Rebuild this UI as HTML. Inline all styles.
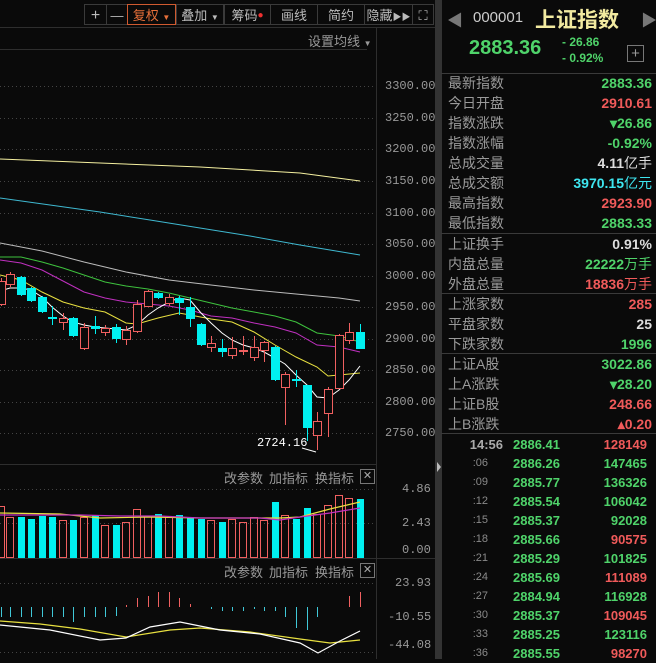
<!DOCTYPE html>
<html><head><meta charset="utf-8"><style>
body{margin:0;width:656px;height:659px;background:#0a0a0a;overflow:hidden;font-family:"Liberation Sans","Noto Sans CJK SC",sans-serif;position:relative}
.t{position:absolute;white-space:nowrap}
.btn{position:absolute;top:4px;height:21px;border:1px solid #3a3a3a;color:#bbb;font-size:13px;line-height:21px;text-align:center;box-sizing:border-box}
.row{position:absolute;left:448px;width:204px;height:20px;font-size:14px;line-height:20px}
.row .l{color:#9a9a9a;position:absolute;left:0}
.row .v{position:absolute;right:0;font-weight:bold}
.g{color:#4fd36a}.r{color:#f05a5a}.w{color:#ddd}.c{color:#3ee6f0}
.tk{position:absolute;left:441px;width:215px;height:19px;font-size:13px;line-height:19px;font-weight:bold}
.tk .a{position:absolute;right:168px;color:#8a8a8a;font-weight:normal;font-size:11px}
.tk .b{position:absolute;left:72px;color:#4fd36a}
.tk .d{position:absolute;right:9px}
.sep{position:absolute;left:441px;width:215px;height:1px;background:#3a3a3a}
.lab{position:absolute;font-size:13px;color:#999}
</style></head><body>
<svg width="656" height="659" style="position:absolute;left:0;top:0">
<g stroke="#2e2e2e"><line x1="376.5" y1="27" x2="376.5" y2="659"/><line x1="0" y1="464.5" x2="376" y2="464.5"/><line x1="0" y1="558.5" x2="436" y2="558.5"/><line x1="0" y1="49.5" x2="367" y2="49.5"/><line x1="0" y1="27.5" x2="435" y2="27.5"/></g>
<rect x="435" y="0" width="7" height="659" fill="#333"/>
<path d="M437 462 L441 467 L437 472Z" fill="#bbb"/>
<g stroke="#444" stroke-dasharray="1,3">
<line x1="0" y1="86.5" x2="376" y2="86.5"/><line x1="0" y1="118.5" x2="376" y2="118.5"/><line x1="0" y1="149.5" x2="376" y2="149.5"/><line x1="0" y1="181.5" x2="376" y2="181.5"/><line x1="0" y1="213.5" x2="376" y2="213.5"/><line x1="0" y1="244.5" x2="376" y2="244.5"/><line x1="0" y1="276.5" x2="376" y2="276.5"/><line x1="0" y1="307.5" x2="376" y2="307.5"/><line x1="0" y1="339.5" x2="376" y2="339.5"/><line x1="0" y1="370.5" x2="376" y2="370.5"/><line x1="0" y1="402.5" x2="376" y2="402.5"/><line x1="0" y1="433.5" x2="376" y2="433.5"/>
<line x1="0" y1="489.5" x2="376" y2="489.5"/><line x1="0" y1="523.5" x2="376" y2="523.5"/>
<line x1="0" y1="583.5" x2="376" y2="583.5"/><line x1="0" y1="652.5" x2="376" y2="652.5"/>
</g>
<g fill="none" stroke-width="1">
<polyline stroke="#f5f0a0" points="0,159 100,163 200,167 300,173 360,181"/>
<polyline stroke="#3fb8d0" points="0,198 50,205 100,212 150,220 200,228 250,236 300,245 360,255"/>
<polyline stroke="#bbb" points="0,243 42,251 84,262 126,272 169,280 211,285 254,290 296,294 339,298 360,301"/>
<polyline stroke="#3ec23e" points="0,257 21,257 42,262 63,268 84,275 105,282 126,286 148,289 169,293 190,298 211,303 232,308 254,312 275,316 296,322 317,333 339,336 360,342"/>
<polyline stroke="#c030c0" points="0,260 21,263 42,270 63,281 84,292 105,298 126,302 148,304 169,306 190,310 211,316 232,318 254,323 275,327 296,333 317,345 339,347 360,352"/>
<polyline stroke="#e8e040" points="0,275 21,280 42,292 63,302 84,308 105,312 126,323 137,324 158,318 179,313 190,315 211,319 232,322 254,332 275,345 296,357 317,367 328,376 339,375 360,373"/>
<polyline stroke="#fff" points="0,291 10,288 21,288 31,290 42,297 52,307 63,316 73,322 84,325 95,327 105,328 116,329 126,330 137,325 148,315 158,308 169,302 179,298 190,300 201,313 211,323 222,333 232,340 243,345 254,348 264,352 275,358 285,364 296,375 307,385 317,397 328,398 339,390 349,380 360,366"/>
</g>
<g id="c"></g>
<text x="257" y="446" fill="#fff" font-size="12" font-family="Liberation Mono">2724.16</text>
<path d="M302 448 L316 452" stroke="#fff" fill="none"/>
<g fill="none" stroke-width="1.2">
<polyline stroke="#e8e040" points="0,621 40,624 80,629 126,637 170,630 200,628 250,632 300,639 330,643 360,640"/>
<polyline stroke="#fff" points="0,625 50,630 100,640 126,638 150,627 180,622 220,630 260,634 300,643 318,653 340,641 360,631"/>
<polyline stroke="#e8e040" points="0,513 60,514 100,518 150,517 200,518 260,518 280,518 300,517 330,509 360,502"/>
<polyline stroke="#c030c0" points="0,515 80,515 120,516 160,516 200,518 260,518 280,520 300,517 330,513 360,508"/>
</g>
</svg>
<script>
var C=[[1,'r',281,304,278,306],[10,'r',274,284,272,287],[21,'c',277,295,276,296],[31,'c',288,301,287,302],[42,'c',297,312,296,313],[52,'c',317,319,306,325],[63,'r',318,322,313,330],[73,'c',318,336,317,337],[84,'r',327,348,323,350],[95,'c',326,329,316,334],[105,'r',328,332,325,336],[116,'c',327,339,324,343],[126,'r',330,339,326,345],[137,'r',304,331,300,333],[148,'r',291,306,290,307],[158,'c',293,298,292,299],[169,'r',297,303,294,306],[179,'c',298,303,296,315],[190,'c',307,319,297,327],[201,'c',324,345,323,346],[211,'r',343,347,336,352],[222,'c',348,352,339,357],[232,'r',348,355,337,359],[243,'r',350,351,336,355],[254,'r',347,357,336,361],[264,'r',342,350,341,362],[275,'c',347,380,346,381],[285,'r',374,387,372,425],[296,'c',379,381,370,387],[307,'c',385,428,385,441],[317,'r',421,435,412,450],[328,'r',389,413,387,437],[339,'r',335,388,334,388],[349,'r',332,340,323,344],[360,'c',332,349,324,349]];
var V=[506,517,517,519,516,517,520,520,517,515,525,525,522,509,516,514,517,515,517,519,520,522,519,522,517,520,502,515,519,508,514,505,495,498,499];
var M=[617,617,617,617,617,617,617,622,617,617,617,616,605,598,596,592,592,598,604,607,609,611,611,611,609,611,611,617,628,630,617,0,0,596,592];
var s='',R='#f06060',B='#00f0f0';
C.forEach(function(k,i){var x=k[0],col=k[1]=='r'?R:B;
s+='<line x1="'+(x+.5)+'" y1="'+k[4]+'" x2="'+(x+.5)+'" y2="'+k[5]+'" stroke="'+col+'"/>';
var h=Math.max(1,k[3]-k[2]);
if(k[1]=='r')s+='<rect x="'+(x-3.5)+'" y="'+(k[2]+.5)+'" width="8" height="'+h+'" fill="#0a0a0a" stroke="'+col+'"/>';
else s+='<rect x="'+(x-4)+'" y="'+k[2]+'" width="9" height="'+h+'" fill="'+col+'"/>';
var v=V[i];
if(k[1]=='r')s+='<rect x="'+(x-3.5)+'" y="'+(v+.5)+'" width="7" height="'+(557-v)+'" fill="none" stroke="'+col+'"/>';
else s+='<rect x="'+(x-3)+'" y="'+v+'" width="7" height="'+(558-v)+'" fill="'+col+'"/>';
var m=M[i];if(m){var c2=m<607?R:'#40c8d8';s+='<line x1="'+(x+.5)+'" y1="607" x2="'+(x+.5)+'" y2="'+m+'" stroke="'+c2+'"/>';}
});
document.getElementById('c').outerHTML='<g>'+s+'</g>';
</script>
<div class="btn" style="left:84px;width:23px;font-size:16px">+</div>
<div class="btn" style="left:106px;width:22px">—</div>
<div class="btn" style="left:127px;width:49px;border-color:#d05a30;color:#e8703a">复权 <span style="font-size:8px">▼</span></div>
<div class="btn" style="left:176px;width:48px">叠加 <span style="font-size:8px">▼</span></div>
<div class="btn" style="left:224px;width:47px">筹码<span style="color:#f03030;font-size:10px;vertical-align:top">●</span></div>
<div class="btn" style="left:270px;width:48px">画线</div>
<div class="btn" style="left:317px;width:48px">简约</div>
<div class="btn" style="left:364px;width:49px">隐藏<span style="font-size:9px">▶▶</span></div>
<div class="btn" style="left:412px;width:22px">⛶</div>
<div class="t" style="left:308px;top:31px;font-size:13px;color:#999">设置均线 <span style="font-size:8px">▼</span></div>
<div style="position:absolute;left:385px;top:0;font-size:12px;color:#999;font-family:'Liberation Mono'">
<div class="t" style="top:79px">3300.00</div><div class="t" style="top:111px">3250.00</div><div class="t" style="top:142px">3200.00</div><div class="t" style="top:174px">3150.00</div><div class="t" style="top:206px">3100.00</div><div class="t" style="top:237px">3050.00</div><div class="t" style="top:269px">3000.00</div><div class="t" style="top:300px">2950.00</div><div class="t" style="top:332px">2900.00</div><div class="t" style="top:363px">2850.00</div><div class="t" style="top:395px">2800.00</div><div class="t" style="top:426px">2750.00</div>
<div class="t" style="top:482px;left:17px">4.86</div><div class="t" style="top:516px;left:17px">2.43</div><div class="t" style="top:543px;left:17px">0.00</div>
<div class="t" style="top:576px;left:10px">23.93</div><div class="t" style="top:610px;left:3px">-10.55</div><div class="t" style="top:638px;left:3px">-44.08</div>
</div>
<div class="lab" style="left:224px;top:468px">改参数</div><div class="lab" style="left:269px;top:468px">加指标</div><div class="lab" style="left:315px;top:468px">换指标</div>
<div class="t" style="left:360px;top:469px;width:13px;height:13px;border:1px solid #777;color:#aaa;font-size:11px;line-height:13px;text-align:center">✕</div>
<div class="lab" style="left:224px;top:562px">改参数</div><div class="lab" style="left:269px;top:562px">加指标</div><div class="lab" style="left:315px;top:562px">换指标</div>
<div class="t" style="left:360px;top:563px;width:13px;height:13px;border:1px solid #777;color:#aaa;font-size:11px;line-height:13px;text-align:center">✕</div>

<div class="t" style="left:447px;top:7px;color:#777;font-size:16px">◀</div>
<div class="t" style="left:641px;top:7px;color:#777;font-size:16px">▶</div>
<div class="t" style="left:473px;top:9px;color:#ccc;font-size:15px">000001</div>
<div class="t" style="left:535px;top:4px;color:#f2eaa0;font-size:21px;font-weight:bold">上证指数</div>
<div class="t" style="left:469px;top:37px;color:#4fd36a;font-size:20px;font-weight:bold">2883.36</div>
<div class="t" style="left:562px;top:34px;color:#4fd36a;font-size:12px;font-weight:bold;line-height:16px">- 26.86<br>- 0.92%</div>
<div class="t" style="left:627px;top:45px;width:15px;height:15px;border:1px solid #777;color:#999;font-size:15px;line-height:15px;text-align:center">+</div>
<div class="sep" style="top:73px"></div><div class="sep" style="top:233px"></div><div class="sep" style="top:293px"></div><div class="sep" style="top:353px"></div><div class="sep" style="top:433px"></div>
<div class="row" style="top:73px"><span class="l">最新指数</span><span class="v g">2883.36</span></div>
<div class="row" style="top:93px"><span class="l">今日开盘</span><span class="v r">2910.61</span></div>
<div class="row" style="top:113px"><span class="l">指数涨跌</span><span class="v g">▾26.86</span></div>
<div class="row" style="top:133px"><span class="l">指数涨幅</span><span class="v g">-0.92%</span></div>
<div class="row" style="top:153px"><span class="l">总成交量</span><span class="v w">4.11<span style="font-weight:normal">亿手</span></span></div>
<div class="row" style="top:173px"><span class="l">总成交额</span><span class="v c">3970.15<span style="font-weight:normal">亿元</span></span></div>
<div class="row" style="top:193px"><span class="l">最高指数</span><span class="v r">2923.90</span></div>
<div class="row" style="top:213px"><span class="l">最低指数</span><span class="v g">2883.33</span></div>
<div class="row" style="top:234px"><span class="l">上证换手</span><span class="v w">0.91%</span></div>
<div class="row" style="top:254px"><span class="l">内盘总量</span><span class="v g">22222<span style="font-weight:normal">万手</span></span></div>
<div class="row" style="top:274px"><span class="l">外盘总量</span><span class="v r">18836<span style="font-weight:normal">万手</span></span></div>
<div class="row" style="top:294px"><span class="l">上涨家数</span><span class="v r">285</span></div>
<div class="row" style="top:314px"><span class="l">平盘家数</span><span class="v w">25</span></div>
<div class="row" style="top:334px"><span class="l">下跌家数</span><span class="v g">1996</span></div>
<div class="row" style="top:354px"><span class="l">上证A股</span><span class="v g">3022.86</span></div>
<div class="row" style="top:374px"><span class="l">上A涨跌</span><span class="v g">▾28.20</span></div>
<div class="row" style="top:394px"><span class="l">上证B股</span><span class="v r">248.66</span></div>
<div class="row" style="top:414px"><span class="l">上B涨跌</span><span class="v r">▴0.20</span></div>
<div class="tk" style="top:435px"><span class="a" style="font-size:13px;font-weight:bold;color:#aaa;right:153px">14:56</span><span class="b">2886.41</span><span class="d r">128149</span></div>
<div class="tk" style="top:454px"><span class="a">:06</span><span class="b">2886.26</span><span class="d g">147465</span></div>
<div class="tk" style="top:473px"><span class="a">:09</span><span class="b">2885.77</span><span class="d g">136326</span></div>
<div class="tk" style="top:492px"><span class="a">:12</span><span class="b">2885.54</span><span class="d g">106042</span></div>
<div class="tk" style="top:511px"><span class="a">:15</span><span class="b">2885.37</span><span class="d g">92028</span></div>
<div class="tk" style="top:530px"><span class="a">:18</span><span class="b">2885.66</span><span class="d r">90575</span></div>
<div class="tk" style="top:549px"><span class="a">:21</span><span class="b">2885.29</span><span class="d g">101825</span></div>
<div class="tk" style="top:568px"><span class="a">:24</span><span class="b">2885.69</span><span class="d r">111089</span></div>
<div class="tk" style="top:587px"><span class="a">:27</span><span class="b">2884.94</span><span class="d g">116928</span></div>
<div class="tk" style="top:606px"><span class="a">:30</span><span class="b">2885.37</span><span class="d r">109045</span></div>
<div class="tk" style="top:625px"><span class="a">:33</span><span class="b">2885.25</span><span class="d g">123116</span></div>
<div class="tk" style="top:644px"><span class="a">:36</span><span class="b">2885.55</span><span class="d r">98270</span></div>
</body></html>
